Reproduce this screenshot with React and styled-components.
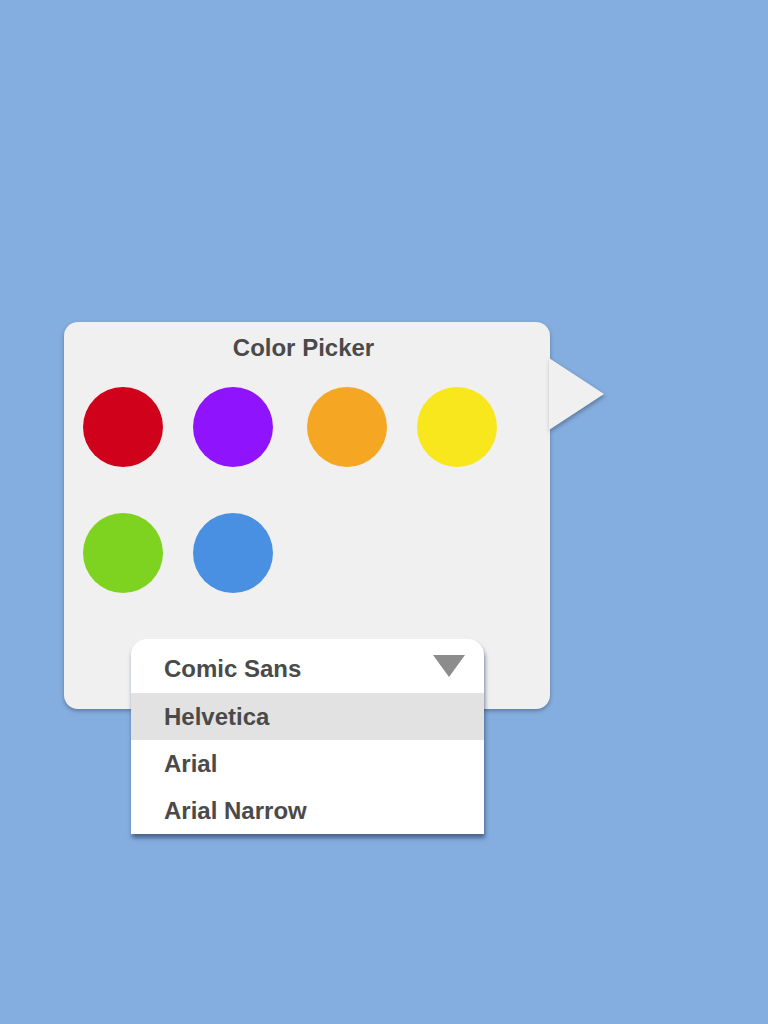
import styled, { createGlobalStyle } from "styled-components";

const GlobalStyle = createGlobalStyle`
  html, body {
    margin: 0;
    padding: 0;
    background: #85aee0;
    font-family: "Liberation Sans", Arial, sans-serif;
  }
`;

const Page = styled.div`
  min-height: 1024px;
  padding: 322px 0 0 64px;
  box-sizing: border-box;
`;

const Panel = styled.div`
  position: relative;
  display: flex;
  flex-direction: column;
  width: 486px;
  padding-top: 12px;
  background: #f0f0f0;
  border-radius: 14px;
  box-shadow: 0 2px 4px rgba(0, 0, 0, 0.3);
`;

const Tail = styled.svg`
  position: absolute;
  top: 36px;
  right: -55px;
  width: 56px;
  height: 72px;
  filter: drop-shadow(1px 2px 2px rgba(0, 0, 0, 0.3));
`;

const Title = styled.h1`
  margin: 0;
  padding-right: 7px;
  text-align: center;
  font-size: 24px;
  line-height: 28px;
  font-weight: 700;
  color: #4a4a4a;
`;

const Swatches = styled.div`
  display: grid;
  grid-template-columns: 110px 114px 110px 80px;
  row-gap: 46px;
  margin-top: 25px;
  padding-left: 19px;
`;

const Swatch = styled.button`
  width: 80px;
  height: 80px;
  padding: 0;
  border: none;
  border-radius: 50%;
  background: ${(p) => p.$color};
  cursor: pointer;
`;

const Dropdown = styled.div`
  align-self: flex-start;
  width: 353px;
  margin: 46px 0 -125px 67px;
  background: #fff;
  border-radius: 16px 16px 0 0;
  box-shadow: 1px 4px 4px rgba(20, 40, 70, 0.55);
  color: #4a4a4a;
  font-size: 24px;
  font-weight: 700;
`;

const Header = styled.div`
  display: flex;
  justify-content: space-between;
  align-items: flex-start;
  height: 54px;
  padding: 16px 19px 0 33px;
  box-sizing: border-box;
  line-height: 28px;
`;

const Caret = styled.span`
  width: 0;
  height: 0;
  border-left: 16px solid transparent;
  border-right: 16px solid transparent;
  border-top: 22px solid #8c8c8c;
`;

const Option = styled.div`
  height: 47px;
  line-height: 47px;
  padding-left: 33px;
  background: ${(p) => (p.$active ? "#e2e2e2" : "transparent")};
`;

const colors = ["#d0011b", "#9013fe", "#f5a623", "#f8e71c", "#7ed321", "#4a90e2"];
const fonts = ["Helvetica", "Arial", "Arial Narrow"];

export default function App() {
  return (
    <Page>
      <GlobalStyle />
      <Panel>
        <Tail viewBox="0 0 56 72">
          <polygon points="0,0 55,36 0,72" fill="#f0f0f0" />
        </Tail>
        <Title>Color Picker</Title>
        <Swatches>
          {colors.map((c) => (
            <Swatch key={c} $color={c} />
          ))}
        </Swatches>
        <Dropdown>
          <Header>
            <span>Comic Sans</span>
            <Caret />
          </Header>
          {fonts.map((f, i) => (
            <Option key={f} $active={i === 0}>
              {f}
            </Option>
          ))}
        </Dropdown>
      </Panel>
    </Page>
  );
}
